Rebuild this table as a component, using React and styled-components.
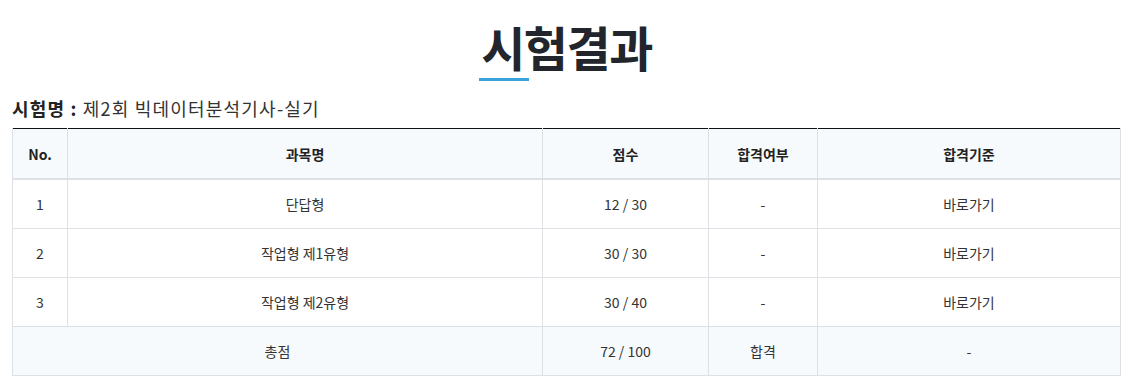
import styled, { createGlobalStyle } from "styled-components"

const GlobalStyle = createGlobalStyle`
  body {
    margin: 0;
    background: #fff;
    font-family: "Noto Sans CJK KR", "Noto Sans", sans-serif;
    color: #222;
  }
`

const results = [
  { no: 1, subject: "단답형", score: "12 / 30", pass: "-", link: "바로가기" },
  { no: 2, subject: "작업형 제1유형", score: "30 / 30", pass: "-", link: "바로가기" },
  { no: 3, subject: "작업형 제2유형", score: "30 / 40", pass: "-", link: "바로가기" },
]

const App = () => {
  return (
    <>
      <GlobalStyle />
      <Page>
        <Title>
          <Accent>시</Accent>험결과
        </Title>
        <ExamName>
          <strong>시험명 :</strong> 제2회 빅데이터분석기사-실기
        </ExamName>
        <Table>
          <colgroup>
            <col style={{ width: 55 }} />
            <col style={{ width: 475 }} />
            <col style={{ width: 166 }} />
            <col style={{ width: 109 }} />
            <col />
          </colgroup>
          <thead>
            <tr>
              <Th>No.</Th>
              <Th>과목명</Th>
              <Th>점수</Th>
              <Th>합격여부</Th>
              <Th>합격기준</Th>
            </tr>
          </thead>
          <tbody>
            {results.map((row) => (
              <tr key={row.no}>
                <Td>{row.no}</Td>
                <Td>{row.subject}</Td>
                <Td>{row.score}</Td>
                <Td>{row.pass}</Td>
                <Td>
                  <LinkText>{row.link}</LinkText>
                </Td>
              </tr>
            ))}
            <tr>
              <Td $total colSpan={2}>
                총점
              </Td>
              <Td $total>72 / 100</Td>
              <Td $total>합격</Td>
              <Td $total>-</Td>
            </tr>
          </tbody>
        </Table>
      </Page>
    </>
  )
}

const Page = styled.div`
  padding: 0 10px 0 12px;
`

const Title = styled.h2`
  margin: 0;
  padding-top: 16px;
  text-align: center;
  font-size: 48px;
  font-weight: 700;
  line-height: 60px;
  letter-spacing: -1.5px;
  color: #22252b;
`

const Accent = styled.span`
  display: inline-block;
  border-bottom: 3px solid #3aa3dd;
  line-height: 58px;
  padding: 0 5px 3px 2px;
  margin: 0 -5px 0 -2px;
`

const ExamName = styled.p`
  margin: 15px 0 0;
  padding-bottom: 8px;
  font-size: 18px;
  line-height: 24px;
  letter-spacing: 1.2px;
  color: #333;
  strong {
    font-weight: 700;
    color: #222;
  }
`

const Table = styled.table`
  width: 1109px;
  border-collapse: collapse;
  border-top: 1px solid #111;
  table-layout: fixed;
  font-size: 14px;
  thead tr {
    border-bottom: 2px solid #dde1e6;
  }
`

const Th = styled.th`
  height: 49px;
  padding: 0;
  background: #f7fafd;
  border-left: 1px solid #dde1e6;
  border-right: 1px solid #dde1e6;
  font-weight: 700;
  color: #222;
  text-align: center;
`

const Td = styled.td`
  height: 48px;
  padding: 0;
  border: 1px solid #dde1e6;
  text-align: center;
  color: #333;
  background: ${(props) => (props.$total ? "#f7fafd" : "#fff")};
`

const LinkText = styled.span`
  cursor: pointer;
`

export default App
